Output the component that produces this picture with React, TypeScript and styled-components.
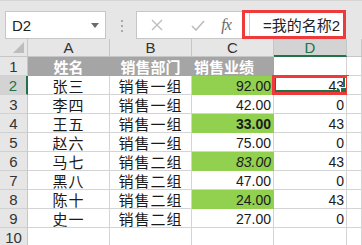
import { Fragment } from "react";
import styled, { createGlobalStyle } from "styled-components";

const GlobalStyle = createGlobalStyle`
  html, body { margin: 0; padding: 0; background: #ffffff; }
  body {
    width: 362px;
    height: 245px;
    overflow: hidden;
    font-family: "Liberation Sans", "Noto Sans CJK SC", sans-serif;
    color: #222;
  }
`;

const Sheet = styled.div`
  display: flex;
  flex-direction: column;
  width: 362px;
  height: 245px;
  overflow: hidden;
`;

const TopStrip = styled.div`
  height: 3px;
  background: #efefef;
  border-bottom: 1px solid #d6d6d6;
`;

const Toolbar = styled.div`
  display: flex;
  align-items: flex-start;
  height: 48px;
  box-sizing: border-box;
  padding: 10px 0 0 5px;
  background: #e6e6e6;
`;

const NameBox = styled.div`
  display: flex;
  align-items: center;
  justify-content: space-between;
  width: 101px;
  height: 28px;
  box-sizing: border-box;
  padding: 0 6px 0 6px;
  background: #fff;
  border: 1px solid #c6c6c6;
  font-size: 15px;
  color: #222;
`;

const Caret = styled.span`
  width: 0;
  height: 0;
  border-left: 4px solid transparent;
  border-right: 4px solid transparent;
  border-top: 5px solid #6b6b6b;
`;

const Dots = styled.div`
  display: flex;
  flex-direction: column;
  gap: 3px;
  margin: 9px 13px 0 15px;
  span {
    width: 2px;
    height: 2px;
    background: #a9a9a9;
  }
`;

const FormulaBar = styled.div`
  display: flex;
  align-items: flex-start;
`;

const IconBox = styled.div`
  display: flex;
  align-items: center;
  width: 106px;
  height: 28px;
  box-sizing: border-box;
  padding-left: 13px;
  background: #fff;
  border: 1px solid #c6c6c6;
  border-right: none;
`;

const IconSlot = styled.div<{ $w: number; $gap?: number }>`
  display: flex;
  align-items: center;
  justify-content: center;
  width: ${(p) => p.$w}px;
  margin-left: ${(p) => p.$gap || 0}px;
`;

const Fx = styled.span`
  font-family: "Liberation Serif", serif;
  font-style: italic;
  font-size: 16px;
  color: #6a6a6a;
  letter-spacing: -1px;
`;

const FormulaInput = styled.div`
  display: flex;
  align-items: center;
  width: 104px;
  height: 29px;
  margin-top: -1px;
  box-sizing: border-box;
  border: 3px solid #ee3a3a;
  background: #fff;
`;

const FormulaText = styled.div`
  height: 100%;
  display: flex;
  align-items: center;
  margin-left: 4px;
  padding-left: 13px;
  border-left: 1px solid #cfcfcf;
  font-size: 15px;
  color: #222;
  white-space: nowrap;
`;

const Grid = styled.div`
  display: grid;
  grid-template-columns: 28px 82px 82px 82px 73px 15px;
  grid-template-rows: 18px repeat(10, 19px);
  background: #fff;
`;

const Corner = styled.div`
  display: flex;
  justify-content: flex-end;
  align-items: flex-end;
  padding: 0 3px 3px 0;
  background: #e6e6e6;
  border-right: 1px solid #c6c6c6;
  border-bottom: 1px solid #c6c6c6;
  &::after {
    content: "";
    width: 0;
    height: 0;
    border-left: 11px solid transparent;
    border-bottom: 11px solid #bdbdbd;
  }
`;

const ColHead = styled.div<{ $active?: boolean }>`
  display: flex;
  align-items: center;
  justify-content: center;
  box-sizing: border-box;
  background: ${(p) => (p.$active ? "#d3d3d3" : "#e6e6e6")};
  color: ${(p) => (p.$active ? "#217346" : "#333")};
  border-right: 1px solid #c6c6c6;
  border-bottom: ${(p) => (p.$active ? "2px solid #217346" : "1px solid #c6c6c6")};
  font-size: 15px;
`;

const RowHead = styled.div<{ $active?: boolean }>`
  display: flex;
  align-items: center;
  justify-content: center;
  box-sizing: border-box;
  background: ${(p) => (p.$active ? "#d3d3d3" : "#e6e6e6")};
  color: ${(p) => (p.$active ? "#217346" : "#333")};
  border-right: ${(p) => (p.$active ? "2px solid #217346" : "1px solid #c6c6c6")};
  border-bottom: 1px solid #d0d0d0;
  font-size: 15px;
  padding-top: 1px;
`;

type Align = "left" | "center" | "right";

const Cell = styled.div<{
  $align?: Align;
  $fill?: string;
  $head?: boolean;
  $bold?: boolean;
  $italic?: boolean;
  $cjk?: boolean;
}>`
  position: relative;
  display: flex;
  align-items: center;
  justify-content: ${(p) =>
    p.$align === "right" ? "flex-end" : p.$align === "left" ? "flex-start" : "center"};
  box-sizing: border-box;
  padding: 1px 2px 0 2px;
  background: ${(p) => p.$fill || "#fff"};
  border-right: 1px solid ${(p) => p.$fill || "#d4d4d4"};
  border-bottom: 1px solid ${(p) => p.$fill || "#d4d4d4"};
  color: ${(p) => (p.$head ? "#fff" : "#1a1a1a")};
  font-family: ${(p) =>
    p.$cjk
      ? '"Noto Sans CJK SC", sans-serif'
      : '"Liberation Sans", "Noto Sans CJK SC", sans-serif'};
  font-size: ${(p) => (p.$cjk ? 15 : 14)}px;
  font-weight: ${(p) => (p.$bold || p.$head ? 700 : 400)};
  font-style: ${(p) => (p.$italic ? "italic" : "normal")};
  letter-spacing: ${(p) => (p.$cjk && !p.$head ? "1px" : "0")};
  white-space: nowrap;
`;

// selection outline of the active cell
const Selection = styled.div`
  position: absolute;
  top: 0;
  left: 0;
  right: 1px;
  bottom: 2px;
  border: 2px solid #217346;
  pointer-events: none;
  &::after {
    content: "";
    position: absolute;
    right: -4px;
    bottom: -4px;
    width: 5px;
    height: 5px;
    background: #217346;
    border: 1px solid #fff;
  }
`;

const RedMark = styled.div`
  position: absolute;
  top: -1px;
  left: -2px;
  right: -3px;
  bottom: -1px;
  border: 3px solid #ee3a3a;
  pointer-events: none;
`;

const GREEN = "#92d050";
const HEAD = "#a5a5a5";

type Row = {
  name: string;
  dept: string;
  sales: string;
  d: string;
  fill?: boolean;
  bold?: boolean;
  italic?: boolean;
};

const rows: Row[] = [
  { name: "张三", dept: "销售一组", sales: "92.00", d: "43", fill: true },
  { name: "李四", dept: "销售一组", sales: "42.00", d: "0" },
  { name: "王五", dept: "销售一组", sales: "33.00", d: "43", fill: true, bold: true },
  { name: "赵六", dept: "销售一组", sales: "75.00", d: "0" },
  { name: "马七", dept: "销售二组", sales: "83.00", d: "43", fill: true, italic: true },
  { name: "黑八", dept: "销售二组", sales: "47.00", d: "0" },
  { name: "陈十", dept: "销售二组", sales: "24.00", d: "43", fill: true },
  { name: "史一", dept: "销售二组", sales: "27.00", d: "0" },
];

export default function App() {
  return (
    <Sheet>
      <GlobalStyle />
      <TopStrip />
      <Toolbar>
        <NameBox>
          D2
          <Caret />
        </NameBox>
        <Dots>
          <span />
          <span />
          <span />
        </Dots>
        <FormulaBar>
          <IconBox>
            <IconSlot $w={14}>
              <svg width="12" height="12" viewBox="0 0 12 12">
                <path d="M1 1 L11 11 M11 1 L1 11" stroke="#bdbdbd" strokeWidth="1.4" fill="none" />
              </svg>
            </IconSlot>
            <IconSlot $w={36} $gap={16}>
              <svg width="14" height="11" viewBox="0 0 14 11">
                <path d="M1 6 L5 10 L13 1" stroke="#bdbdbd" strokeWidth="1.6" fill="none" />
              </svg>
            </IconSlot>
            <IconSlot $w={20}>
              <Fx>fx</Fx>
            </IconSlot>
          </IconBox>
          <FormulaInput>
            <FormulaText>=我的名称2</FormulaText>
          </FormulaInput>
        </FormulaBar>
      </Toolbar>
      <Grid>
        <Corner />
        <ColHead>A</ColHead>
        <ColHead>B</ColHead>
        <ColHead>C</ColHead>
        <ColHead $active>D</ColHead>
        <ColHead />

        <RowHead>1</RowHead>
        <Cell $fill={HEAD} $head $cjk>姓名</Cell>
        <Cell $fill={HEAD} $head $cjk>销售部门</Cell>
        <Cell $fill={HEAD} $head $cjk $align="left">销售业绩</Cell>
        <Cell />
        <Cell />

        {rows.map((r, i) => (
          <Fragment key={r.name}>
            <RowHead $active={i === 0}>{i + 2}</RowHead>
            <Cell $cjk>{r.name}</Cell>
            <Cell $cjk>{r.dept}</Cell>
            <Cell
              $align="right"
              $fill={r.fill ? GREEN : undefined}
              $bold={r.bold}
              $italic={r.italic}
            >
              {r.sales}
            </Cell>
            <Cell $align="right">
              {r.d}
              {i === 0 && (
                <>
                  <Selection />
                  <RedMark />
                </>
              )}
            </Cell>
            <Cell />
          </Fragment>
        ))}

        <RowHead>10</RowHead>
        <Cell />
        <Cell />
        <Cell />
        <Cell />
        <Cell />
      </Grid>
    </Sheet>
  );
}
